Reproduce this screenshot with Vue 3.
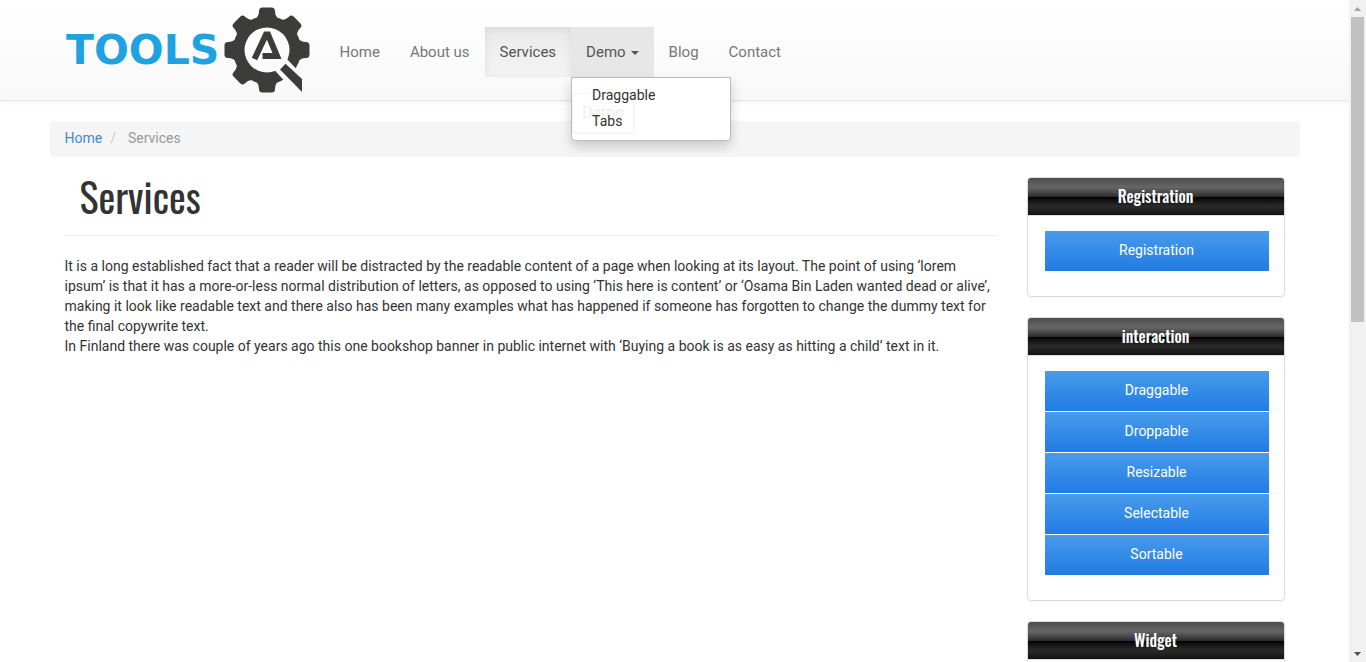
<script setup>
const menu = [
  { label: 'Home' },
  { label: 'About us' },
  { label: 'Services', state: 'active' },
  { label: 'Demo', state: 'open', items: ['Draggable', 'Tabs'] },
  { label: 'Blog' },
  { label: 'Contact' }
]

const paragraphs = [
  'It is a long established fact that a reader will be distracted by the readable content of a page when looking at its layout. The point of using ‘lorem ipsum’ is that it has a more-or-less normal distribution of letters, as opposed to using ‘This here is content’ or ‘Osama Bin Laden wanted dead or alive’, making it look like readable text and there also has been many examples what has happened if someone has forgotten to change the dummy text for the final copywrite text.',
  'In Finland there was couple of years ago this one bookshop banner in public internet with ‘Buying a book is as easy as hitting a child’ text in it.'
]

const panels = [
  { title: 'Registration', links: ['Registration'] },
  { title: 'interaction', links: ['Draggable', 'Droppable', 'Resizable', 'Selectable', 'Sortable'] },
  { title: 'Widget', links: [] }
]

const teeth = [0, 45, 90, 180, 225, 270, 315]
</script>

<template>
  <div class="window">
    <div class="page">
      <header class="navbar">
        <div class="container bar">
          <a class="logo" href="#" aria-label="Tools QA">
            <svg width="245" height="100" viewBox="65 0 245 100">
              <defs>
                <mask id="lens">
                  <rect x="220" y="0" width="95" height="100" fill="#fff" />
                  <circle cx="267" cy="50" r="22.5" fill="#000" />
                  <path d="M274 69.500L286 58L295.500 68L312 82L300 97L283.500 80Z" fill="#000" />
                </mask>
              </defs>
              <text x="66" y="64" class="wordmark">TOOLS</text>
              <g fill="#3c3c3b">
                <g mask="url(#lens)">
                  <circle cx="267" cy="50" r="34" />
                  <path
                    v-for="a in teeth"
                    :key="a"
                    :transform="`rotate(${a} 267 50)`"
                    d="M254 20Q259 17 259 11Q259 7.500 262.500 7.500H271.500Q275 7.500 275 11Q275 17 280 20Z"
                  />
                </g>
                <path d="M280 69.500L285.500 63.700L302 79V92Z" />
              </g>
              <path d="M254.500 59L266 34.500H268L277 56H262.500" class="mark" />
            </svg>
          </a>
          <nav>
            <ul class="menu">
              <li v-for="entry in menu" :key="entry.label">
                <a href="#" :class="entry.state">
                  {{ entry.label }}<span v-if="entry.items" class="caret"></span>
                </a>
                <ul v-if="entry.items" class="dropdown">
                  <li class="hint">Demo</li>
                  <li v-for="item in entry.items" :key="item"><a href="#">{{ item }}</a></li>
                </ul>
              </li>
            </ul>
          </nav>
        </div>
      </header>

      <div class="container">
        <ol class="breadcrumb">
          <li><a href="#">Home</a></li>
          <li class="slash">/</li>
          <li>Services</li>
        </ol>
        <div class="columns">
          <main>
            <h1>Services</h1>
            <div class="content">
              <p v-for="text in paragraphs" :key="text">{{ text }}</p>
            </div>
          </main>
          <aside>
            <section v-for="panel in panels" :key="panel.title" class="panel">
              <h3>{{ panel.title }}</h3>
              <ul>
                <li v-for="link in panel.links" :key="link"><a href="#">{{ link }}</a></li>
              </ul>
            </section>
          </aside>
        </div>
      </div>
    </div>
    <div class="scrollbar" aria-hidden="true">
      <span class="arrow up"></span>
      <span class="thumb"></span>
      <span class="arrow down"></span>
    </div>
  </div>
</template>

<style>
body {
  margin: 0;
  overflow: hidden;
}
</style>

<style scoped>
* {
  box-sizing: border-box;
}
.window {
  display: flex;
  height: 100vh;
  font-family: Roboto, "Liberation Sans", sans-serif;
  font-size: 14px;
  line-height: 20px;
  color: #333;
  background: #fff;
}
.page {
  flex: 1;
  min-width: 0;
  overflow: hidden;
}
ul,
ol {
  list-style: none;
  margin: 0;
  padding: 0;
}
a {
  text-decoration: none;
}
.container {
  max-width: 1250px;
  margin: 0 auto;
}
.navbar {
  border-bottom: 1px solid #e4e4e4;
  background: linear-gradient(#fff, #f8f8f8);
  box-shadow: 0 1px 5px rgba(0, 0, 0, 0.075);
  margin-bottom: 20px;
}
.bar {
  display: flex;
  align-items: center;
  padding: 0 15px;
}
.logo svg {
  display: block;
}
.wordmark {
  font: bold 41px "DejaVu Sans", sans-serif;
  fill: #1fa2e0;
}
.mark {
  fill: none;
  stroke: #3c3c3b;
  stroke-width: 6;
}
nav {
  margin: 4px 0 0 15px;
}
.menu {
  display: flex;
}
.menu > li {
  position: relative;
}
.menu > li > a {
  display: block;
  padding: 15px;
  font-size: 15px;
  color: #777;
}
.menu > li > a.active {
  color: #555;
  background: linear-gradient(#ebebeb, #f3f3f3);
  box-shadow: inset 0 3px 9px rgba(0, 0, 0, 0.075);
}
.menu > li > a.open {
  color: #555;
  background: #e7e7e7;
}
.caret {
  display: inline-block;
  margin-left: 5px;
  vertical-align: middle;
  border: 4px solid transparent;
  border-top-color: #555;
  border-bottom: 0;
}
.dropdown {
  position: absolute;
  top: 100%;
  left: 0;
  z-index: 2;
  width: 160px;
  padding: 4px 0 6px;
  border: 1px solid #bbb;
  border-radius: 0 0 4px 4px;
  background: #fff;
  box-shadow: 0 6px 12px rgba(0, 0, 0, 0.175);
}
.dropdown a {
  position: relative;
  display: block;
  padding: 3px 20px;
  color: #333;
}
.hint {
  position: absolute;
  top: 15px;
  left: 0;
  padding: 9px;
  border: 1px solid #f5f5f5;
  border-width: 1px 2px 2px 1px;
  border-radius: 3px;
  font-size: 16px;
  color: #eee;
}
.breadcrumb {
  display: flex;
  padding: 7px 15px 9px;
  border-radius: 4px;
  background: #f5f5f5;
  color: #999;
  margin-bottom: 20px;
}
.breadcrumb a {
  color: #428bca;
}
.slash {
  padding: 0 12px 0 8px;
  color: #ccc;
}
.columns {
  display: flex;
  gap: 30px;
  padding: 0 15px;
}
main {
  flex: 1;
  min-width: 0;
}
h1,
h3 {
  margin: 0;
  font-family: Oswald, "Liberation Sans Narrow", "Open Sans Condensed", sans-serif;
}
h1 {
  padding: 0 15px 20px;
  border-bottom: 1px solid #eee;
  font-size: 40px;
  line-height: 38px;
  font-weight: 400;
}
.content {
  padding-top: 20px;
}
p {
  margin: 0;
}
aside {
  flex: 0 0 258px;
}
.panel {
  margin-bottom: 20px;
  border: 1px solid #ddd;
  border-radius: 4px;
  box-shadow: 0 1px 2px rgba(0, 0, 0, 0.05);
  overflow: hidden;
}
.panel h3 {
  padding: 9px 15px;
  border-bottom: 1px solid #ddd;
  font-size: 16px;
  line-height: 19px;
  font-weight: 500;
  text-align: center;
  color: #fff;
  background: linear-gradient(#4c4c4c 0%, #595959 12%, #666 25%, #474747 39%, #2c2c2c 50%, #000 51%, #111 60%, #2b2b2b 76%, #1c1c1c 91%, #131313 100%) padding-box;
}
.panel ul {
  display: grid;
  gap: 1px;
  padding: 15px 15px 25px 17px;
}
.panel li a {
  display: block;
  padding: 9px 10px 11px;
  text-align: center;
  font-weight: 400;
  color: #fff;
  background: linear-gradient(#499bea, #207ce5);
}
.scrollbar {
  flex: 0 0 17px;
  display: flex;
  flex-direction: column;
  background: #f1f1f1;
}
.thumb {
  width: 13px;
  height: 46%;
  margin: 0 2px;
  background: #c1c1c1;
}
.arrow {
  width: 7px;
  height: 4px;
  margin: 7px 5px 6px;
  background: #505050;
  clip-path: polygon(0 0, 100% 0, 50% 100%);
}
.arrow.up {
  background: #a3a3a3;
  clip-path: polygon(0 100%, 100% 100%, 50% 0);
}
.arrow.down {
  margin-top: auto;
}
</style>
